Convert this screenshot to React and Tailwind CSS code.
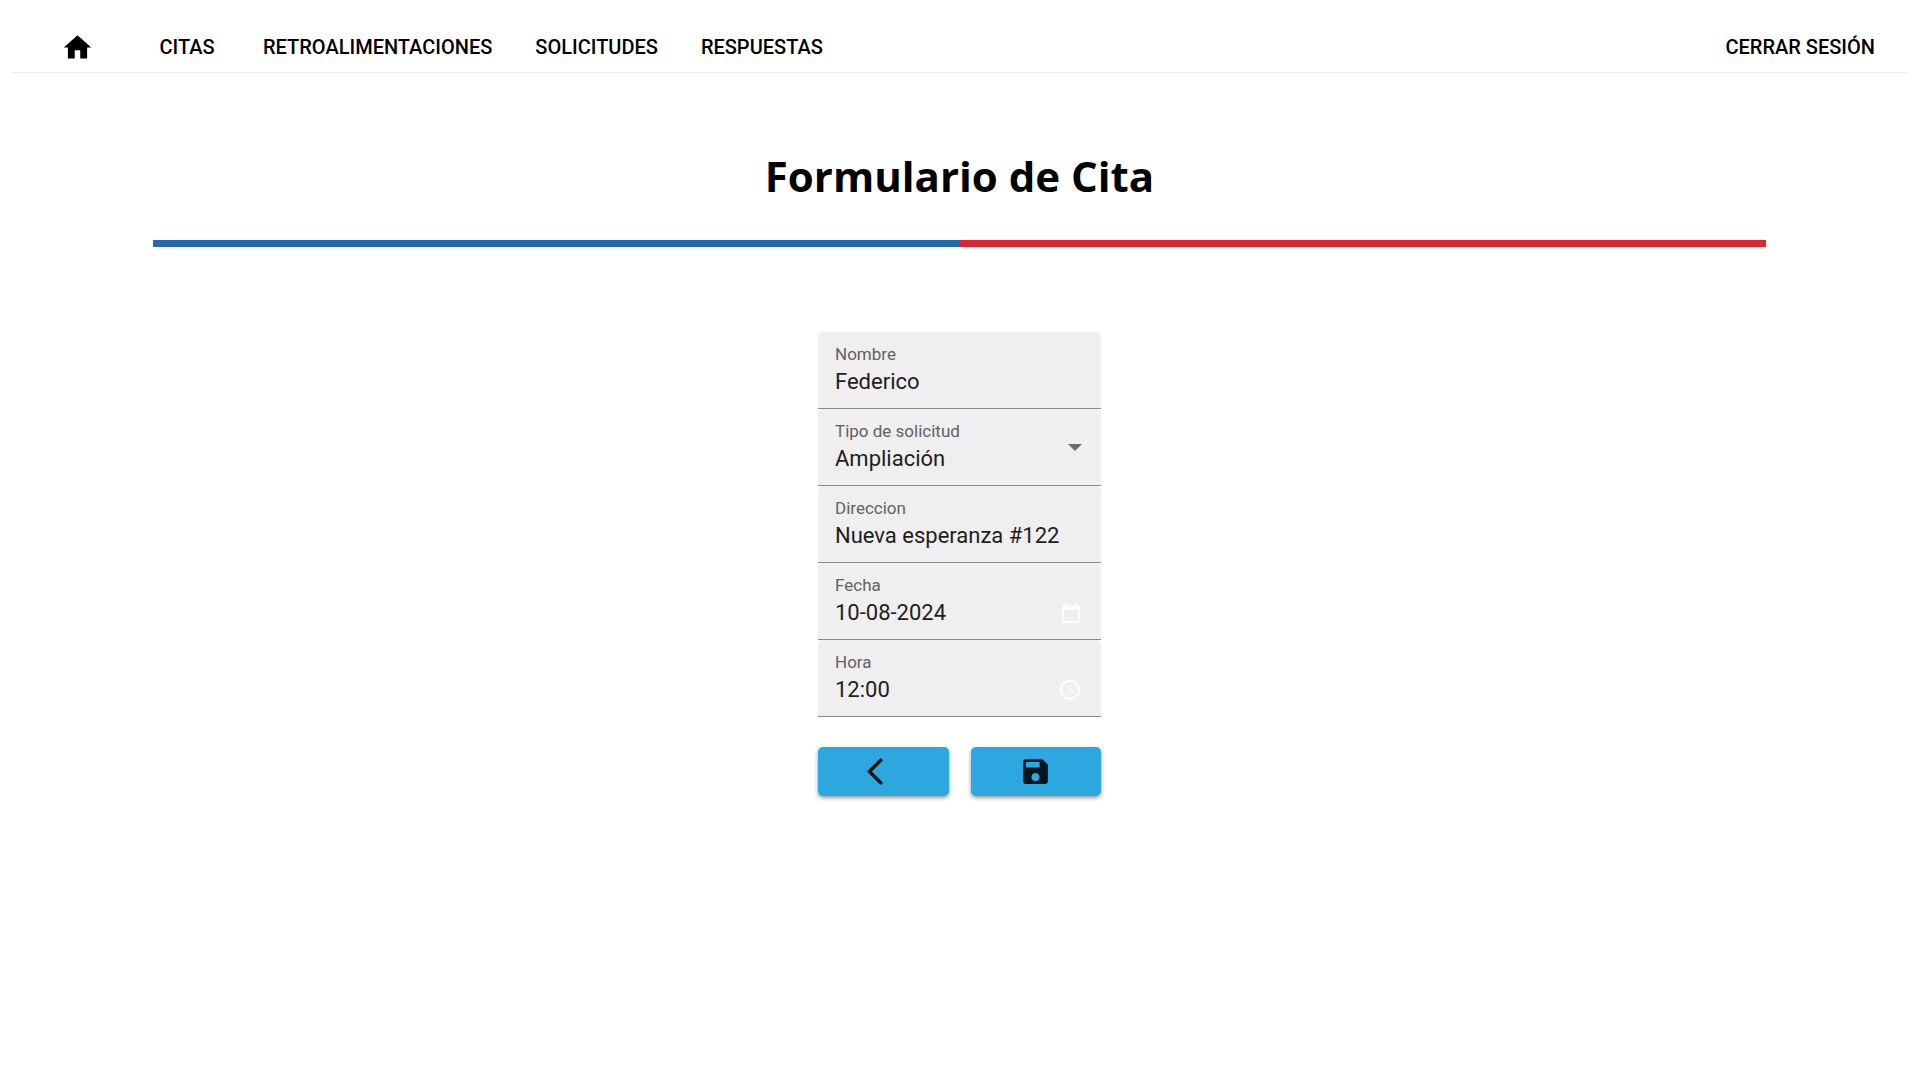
const links = ['Citas', 'Retroalimentaciones', 'Solicitudes', 'Respuestas'];

function NavButton({ children }) {
  return (
    <button type="button" className="min-w-[88px] px-[11px] py-1 text-[20px] leading-7 font-medium uppercase text-black">
      {children}
    </button>
  );
}

function Field({ id, label, icon, children }) {
  return (
    <div className="flex items-stretch justify-between rounded-t-[5px] border-b border-[#8a8a8a] bg-[#efefef] pt-3 pr-4 pb-3 pl-[17px]">
      <div className="flex min-w-0 flex-1 flex-col gap-1">
        <label htmlFor={id} className="text-[17px] leading-5 text-[#626262]">{label}</label>
        {children}
      </div>
      {icon}
    </div>
  );
}

const control = 'h-7 w-full min-w-0 appearance-none bg-transparent p-0 text-[22px] leading-7 text-[#1e1e1e] outline-none';

export default function App() {
  return (
    <div className="min-h-screen bg-white font-['Roboto',sans-serif]">
      <header className="mx-[11px] flex items-center justify-between border-b border-[#ececec] pt-[29px] pr-[22px] pb-[7px]">
        <nav className="flex items-center gap-[21px]">
          <a href="#inicio" aria-label="Inicio" className="mr-7 ml-[50px] block">
            <svg viewBox="0 0 24 24" className="size-[33px] fill-black"><path d="M10 20v-6h4v6h5v-8h3L12 3 2 12h3v8z" /></svg>
          </a>
          {links.map((l) => <NavButton key={l}>{l}</NavButton>)}
        </nav>
        <NavButton>Cerrar sesión</NavButton>
      </header>

      <main>
        <h1 className="pt-[71px] text-center font-['Open_Sans',sans-serif] text-[42px] leading-[64px] font-bold text-black">Formulario de Cita</h1>
        <div className="mx-[7.95%] mt-8 flex h-[7px]">
          <div className="flex-1 bg-[#216ab1]" />
          <div className="flex-1 bg-[#dd272e]" />
        </div>

        <form className="mx-auto mt-[85px] w-[283px]" onSubmit={(e) => e.preventDefault()}>
          <Field id="nombre" label="Nombre">
            <input id="nombre" type="text" defaultValue="Federico" className={control} />
          </Field>
          <Field
            id="tipo"
            label="Tipo de solicitud"
            icon={<svg viewBox="0 0 14 7" className="mr-[3px] h-[7px] w-[14px] self-center fill-[#6b6b6b]"><path d="M0 0h14L7 7z" /></svg>}
          >
            <select id="tipo" defaultValue="Ampliación" className={control}>
              <option>Ampliación</option>
            </select>
          </Field>
          <Field id="direccion" label="Direccion">
            <input id="direccion" type="text" defaultValue="Nueva esperanza #122" className={control} />
          </Field>
          <Field
            id="fecha"
            label="Fecha"
            icon={
              <button type="button" aria-label="Elegir fecha" className="mr-[5px] mb-1 self-end">
                <svg viewBox="0 0 18 20" className="h-5 w-[18px] fill-white"><path fillRule="evenodd" d="M16 2h-1V0h-2v2H5V0H3v2H2C.9 2 0 2.900 0 4v14c0 1.100.9 2 2 2h14c1.100 0 2-.9 2-2V4c0-1.100-.9-2-2-2zM2 7h14v11H2z" /></svg>
              </button>
            }
          >
            <input id="fecha" type="text" defaultValue="10-08-2024" className={control} />
          </Field>
          <Field
            id="hora"
            label="Hora"
            icon={
              <button type="button" aria-label="Elegir hora" className="mr-[5px] mb-1 self-end">
                <svg viewBox="0 0 20 20" className="size-5 fill-white"><path d="M9.990 0C4.470 0 0 4.480 0 10s4.470 10 9.990 10C15.520 20 20 15.520 20 10S15.520 0 9.990 0zM10 18c-4.420 0-8-3.580-8-8s3.580-8 8-8 8 3.580 8 8-3.580 8-8 8zm.5-13H9v6l5.250 3.150.750-1.230-4.500-2.670z" /></svg>
              </button>
            }
          >
            <input id="hora" type="text" defaultValue="12:00" className={control} />
          </Field>

          <div className="mt-[30px] flex gap-[22px]">
            <button type="button" aria-label="Volver" className="flex h-[49px] flex-1 items-center justify-center rounded-[5px] bg-[#2ca7df] shadow-[0_2px_4px_rgba(0,0,0,0.4)]">
              <svg viewBox="0 0 24 24" className="size-[33px] fill-[#06161d]"><path d="M11.670 3.870 9.900 2.100 0 12l9.900 9.900 1.770-1.770L3.540 12z" /></svg>
            </button>
            <button type="submit" aria-label="Guardar" className="flex h-[49px] flex-1 items-center justify-center rounded-[5px] bg-[#2ca7df] shadow-[0_2px_4px_rgba(0,0,0,0.4)]">
              <svg viewBox="0 0 24 24" className="size-[33px] fill-[#06161d]"><path d="M17 3H5c-1.110 0-2 .9-2 2v14c0 1.100.890 2 2 2h14c1.100 0 2-.9 2-2V7l-4-4zm-5 16c-1.660 0-3-1.340-3-3s1.340-3 3-3 3 1.340 3 3-1.340 3-3 3zm3-10H5V5h10v4z" /></svg>
            </button>
          </div>
        </form>
      </main>
    </div>
  );
}
